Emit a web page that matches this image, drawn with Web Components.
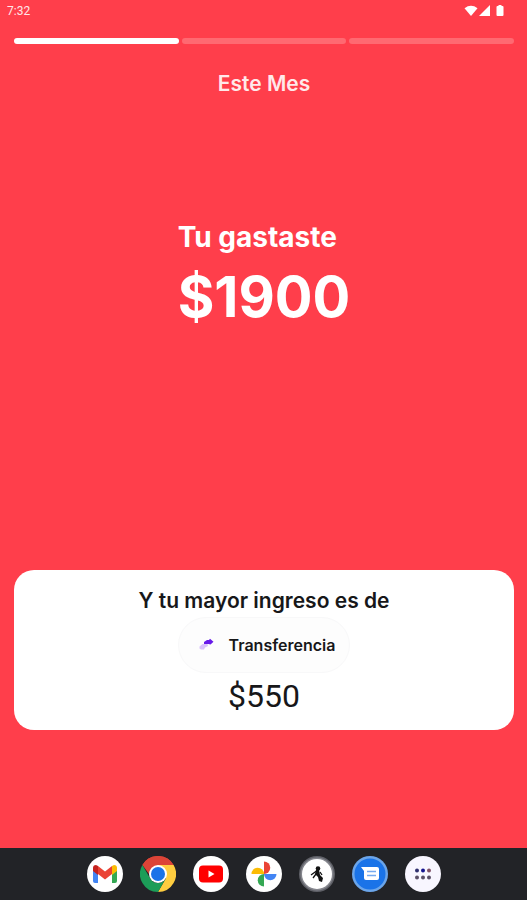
<!DOCTYPE html>
<html lang="es">
<head>
<meta charset="utf-8">
<meta name="viewport" content="width=device-width, initial-scale=1">
<title>Este Mes</title>
<style>
html,body{margin:0;background:#ff3e4b}
body{font-family:Inter,"Noto Sans",sans-serif}
</style>
</head>
<body>
<spend-story>
  <status-bar slot="status">7:32</status-bar>
  <story-progress slot="progress" value="1" max="3"></story-progress>
  <span slot="title">Este Mes</span>
  <spend-total slot="total"><span slot="label">Tu gastaste</span><span slot="amount">$1900</span></spend-total>
  <income-card slot="card">
    <span slot="heading">Y tu mayor ingreso es de</span>
    <category-chip slot="chip">Transferencia</category-chip>
    <span slot="amount">$550</span>
  </income-card>
  <app-dock slot="dock"></app-dock>
</spend-story>
<script>
const define = (name, html, setup) => {
  const template = document.createElement('template');
  template.innerHTML = html;
  customElements.define(name, class extends HTMLElement {
    constructor() {
      super();
      this.attachShadow({ mode: 'open' }).append(template.content.cloneNode(true));
    }
    connectedCallback() { if (setup) setup(this, this.shadowRoot); }
  });
};

define('status-bar', `
<style>
:host{display:flex;align-items:center;justify-content:space-between;height:22px;padding:0 23px 0 7px;color:#ffe6e8;font:12px/22px Roboto,sans-serif}
svg{display:block;width:40px;height:13px}
</style>
<slot></slot>
<svg viewBox="0 0 40 13" fill="#fff" aria-hidden="true">
  <path d="M0.500 3.300Q7-1.600 13.500 3.300L7 11Z"/><path d="M26 0V11H15Z"/>
  <path d="M34.500 0h3v1h1q1 0 1 1v8q0 1-1 1h-5q-1 0-1-1V2q0-1 1-1h1z"/>
</svg>`);

define('story-progress', `
<style>
:host{display:flex;gap:3px;height:6px}
i{flex:1;border-radius:3px;background:#ff6971}
i.done{background:#fff}
</style>`, (el, root) => {
  for (let n = 0; n < Number(el.getAttribute('max')); n++) {
    const bar = document.createElement('i');
    if (n < Number(el.getAttribute('value'))) bar.className = 'done';
    root.append(bar);
  }
});

define('spend-total', `
<style>
:host{display:block;color:#fff;font-weight:700}
h2,p{margin:0;font-weight:inherit}
h2{font-size:28px;line-height:36px}
p{font-size:56px;line-height:84px}
</style>
<h2><slot name="label"></slot></h2><p><slot name="amount"></slot></p>`);

define('category-chip', `
<style>
:host{display:flex;align-items:center;gap:14px;box-sizing:border-box;height:56px;padding:0 14px 0 18px;border:1px solid #f8f8f9;border-radius:28px;background:#fdfdfd;color:#171719;font-size:16px;font-weight:600;line-height:20px}
svg{display:block;width:18px;height:18px}
</style>
<svg viewBox="0 0 18 18" aria-hidden="true">
  <path d="M2.500 10.500l3-2.500h5l.5 2-3 1.500-1 2H4l-1.500-1z" fill="#d9c2fb"/>
  <path d="M7 6l3-2h2l1-1.200 3.500 3L13.500 8.500l-2-.5H7z" fill="#681be9"/>
</svg>
<slot></slot>`);

define('income-card', `
<style>
:host{display:flex;flex-direction:column;align-items:center;box-sizing:border-box;padding:15px 16px 11px;border-radius:20px;background:#fff;color:#171719}
h3,p{margin:0}
h3{font-size:21px;font-weight:600;line-height:32px}
p{font:32px/46px Roboto,sans-serif}
</style>
<h3><slot name="heading"></slot></h3>
<slot name="chip"></slot>
<p><slot name="amount"></slot></p>`);

define('app-icon', `
<style>
:host{display:block}
button{display:block;width:36px;height:36px;margin:0;padding:0;border:0;border-radius:50%;background:none;cursor:pointer}
svg{display:block;width:36px;height:36px}
</style>
<button></button>`, (el, root) => {
  const button = root.querySelector('button');
  const name = el.getAttribute('name');
  button.setAttribute('aria-label', name);
  button.innerHTML = '<svg viewBox="0 0 36 36" aria-hidden="true">' + icons[name] + '</svg>';
});

const disc = '<circle cx="18" cy="18" r="18" fill="#fff"/>';
const icons = {
  Gmail: disc + `
    <path d="M6 13v12q0 2 2 2h3V15z" fill="#4285f4"/>
    <path d="M25 15v12h3q2 0 2-2V13z" fill="#34a853"/>
    <path d="M6 14v-2q0-3 3-3l2 1v9l-5-4z" fill="#c5221f"/>
    <path d="M25 10l2-1q3 0 3 3v3l-5 4z" fill="#fbbc04"/>
    <path d="M11 10l7 5.500 7-5.500v8l-7 5.500-7-5.500z" fill="#ea4335"/>`,
  Chrome: `
    <path d="M18 18L2.400 9A18 18 0 0 1 33.600 9Z" fill="#dc4437"/>
    <path d="M18 9H33.600A18 18 0 0 1 18 36l7.800-13.500z" fill="#ffcd40"/>
    <path d="M2.400 9A18 18 0 0 1 33.600 9H18a9 9 0 0 0-9 9z" fill="#dc4437"/>
    <path d="M2.400 9L10.200 22.500a9 9 0 0 0 15.600 0L18 36A18 18 0 0 1 2.400 9Z" fill="#1c9d58"/>
    <circle cx="18" cy="18" r="9" fill="#fff"/><circle cx="18" cy="18" r="7" fill="#1a73e8"/>`,
  YouTube: disc + `<rect x="6" y="9.500" width="24" height="17" rx="4" fill="#f00"/><path d="M15.500 14.500v7l6-3.500z" fill="#fff"/>`,
  Fotos: disc + `
    <path d="M18 18V5.500a6.200 6.200 0 0 1 0 12.500z" fill="#ea4335"/>
    <path d="M18 18H30.500a6.200 6.200 0 0 1-12.500 0z" fill="#4285f4"/>
    <path d="M18 18V30.500a6.200 6.200 0 0 1 0-12.500z" fill="#34a853"/>
    <path d="M18 18H5.500a6.200 6.200 0 0 1 12.500 0z" fill="#fbbc04"/>`,
  Actividad: `
    <circle cx="18" cy="18" r="18" fill="#5f6067"/><circle cx="18" cy="18" r="16.500" fill="#85868d"/><circle cx="18" cy="18" r="15" fill="#fff"/>
    <circle cx="19" cy="12.500" r="2.300" fill="#111"/>
    <path d="M17 14l3 0 1 5 3 3-1 4-3-1-1-4-3-3z" fill="#111"/>
    <path d="M17.500 15l-5.500 4M17 18l-3 4M21 16l2 3" stroke="#111" stroke-width="1.300" fill="none"/>`,
  Mensajes: `
    <circle cx="18" cy="18" r="18" fill="#6ba5ea"/><circle cx="18" cy="18" r="15.500" fill="#1a73e8"/>
    <path d="M9 11h16q2 0 2 2v9q0 2-2 2H14q-2 0-2-2v-7z" fill="#fff"/>
    <path d="M15 15.500h9M15 19.500h9" stroke="#76aaf0" stroke-width="1.500"/>`,
  Aplicaciones: `
    <circle cx="18" cy="18" r="18" fill="#f8f6ff"/>
    <g fill="#5b5068"><circle cx="12" cy="14.500" r="2" fill="#30306f"/><circle cx="18" cy="14.500" r="2" fill="#15158f"/><circle cx="24" cy="14.500" r="2" fill="#805268"/><circle cx="12" cy="21.500" r="2"/><circle cx="18" cy="21.500" r="2"/><circle cx="24" cy="21.500" r="2"/></g>`
};

define('app-dock', `
<style>
:host{display:flex;align-items:center;justify-content:center;gap:17px;height:52px;background:#222327}
</style>`, (el, root) => {
  for (const name of Object.keys(icons)) {
    const icon = document.createElement('app-icon');
    icon.setAttribute('name', name);
    root.append(icon);
  }
});

define('spend-story', `
<style>
:host{display:flex;flex-direction:column;min-height:100vh;background:#ff3e4b}
main{flex:1;display:flex;flex-direction:column;padding:16px 13px 118px 14px}
h1{margin:24px 0 0;color:#ffe9ea;font-size:21px;font-weight:600;line-height:32px;text-align:center}
.total{flex:1;display:flex;flex-direction:column;align-items:center;padding-top:119px}
</style>
<slot name="status"></slot>
<main>
  <slot name="progress"></slot>
  <h1><slot name="title"></slot></h1>
  <div class="total"><slot name="total"></slot></div>
  <slot name="card"></slot>
</main>
<slot name="dock"></slot>`);
</script>
</body>
</html>
